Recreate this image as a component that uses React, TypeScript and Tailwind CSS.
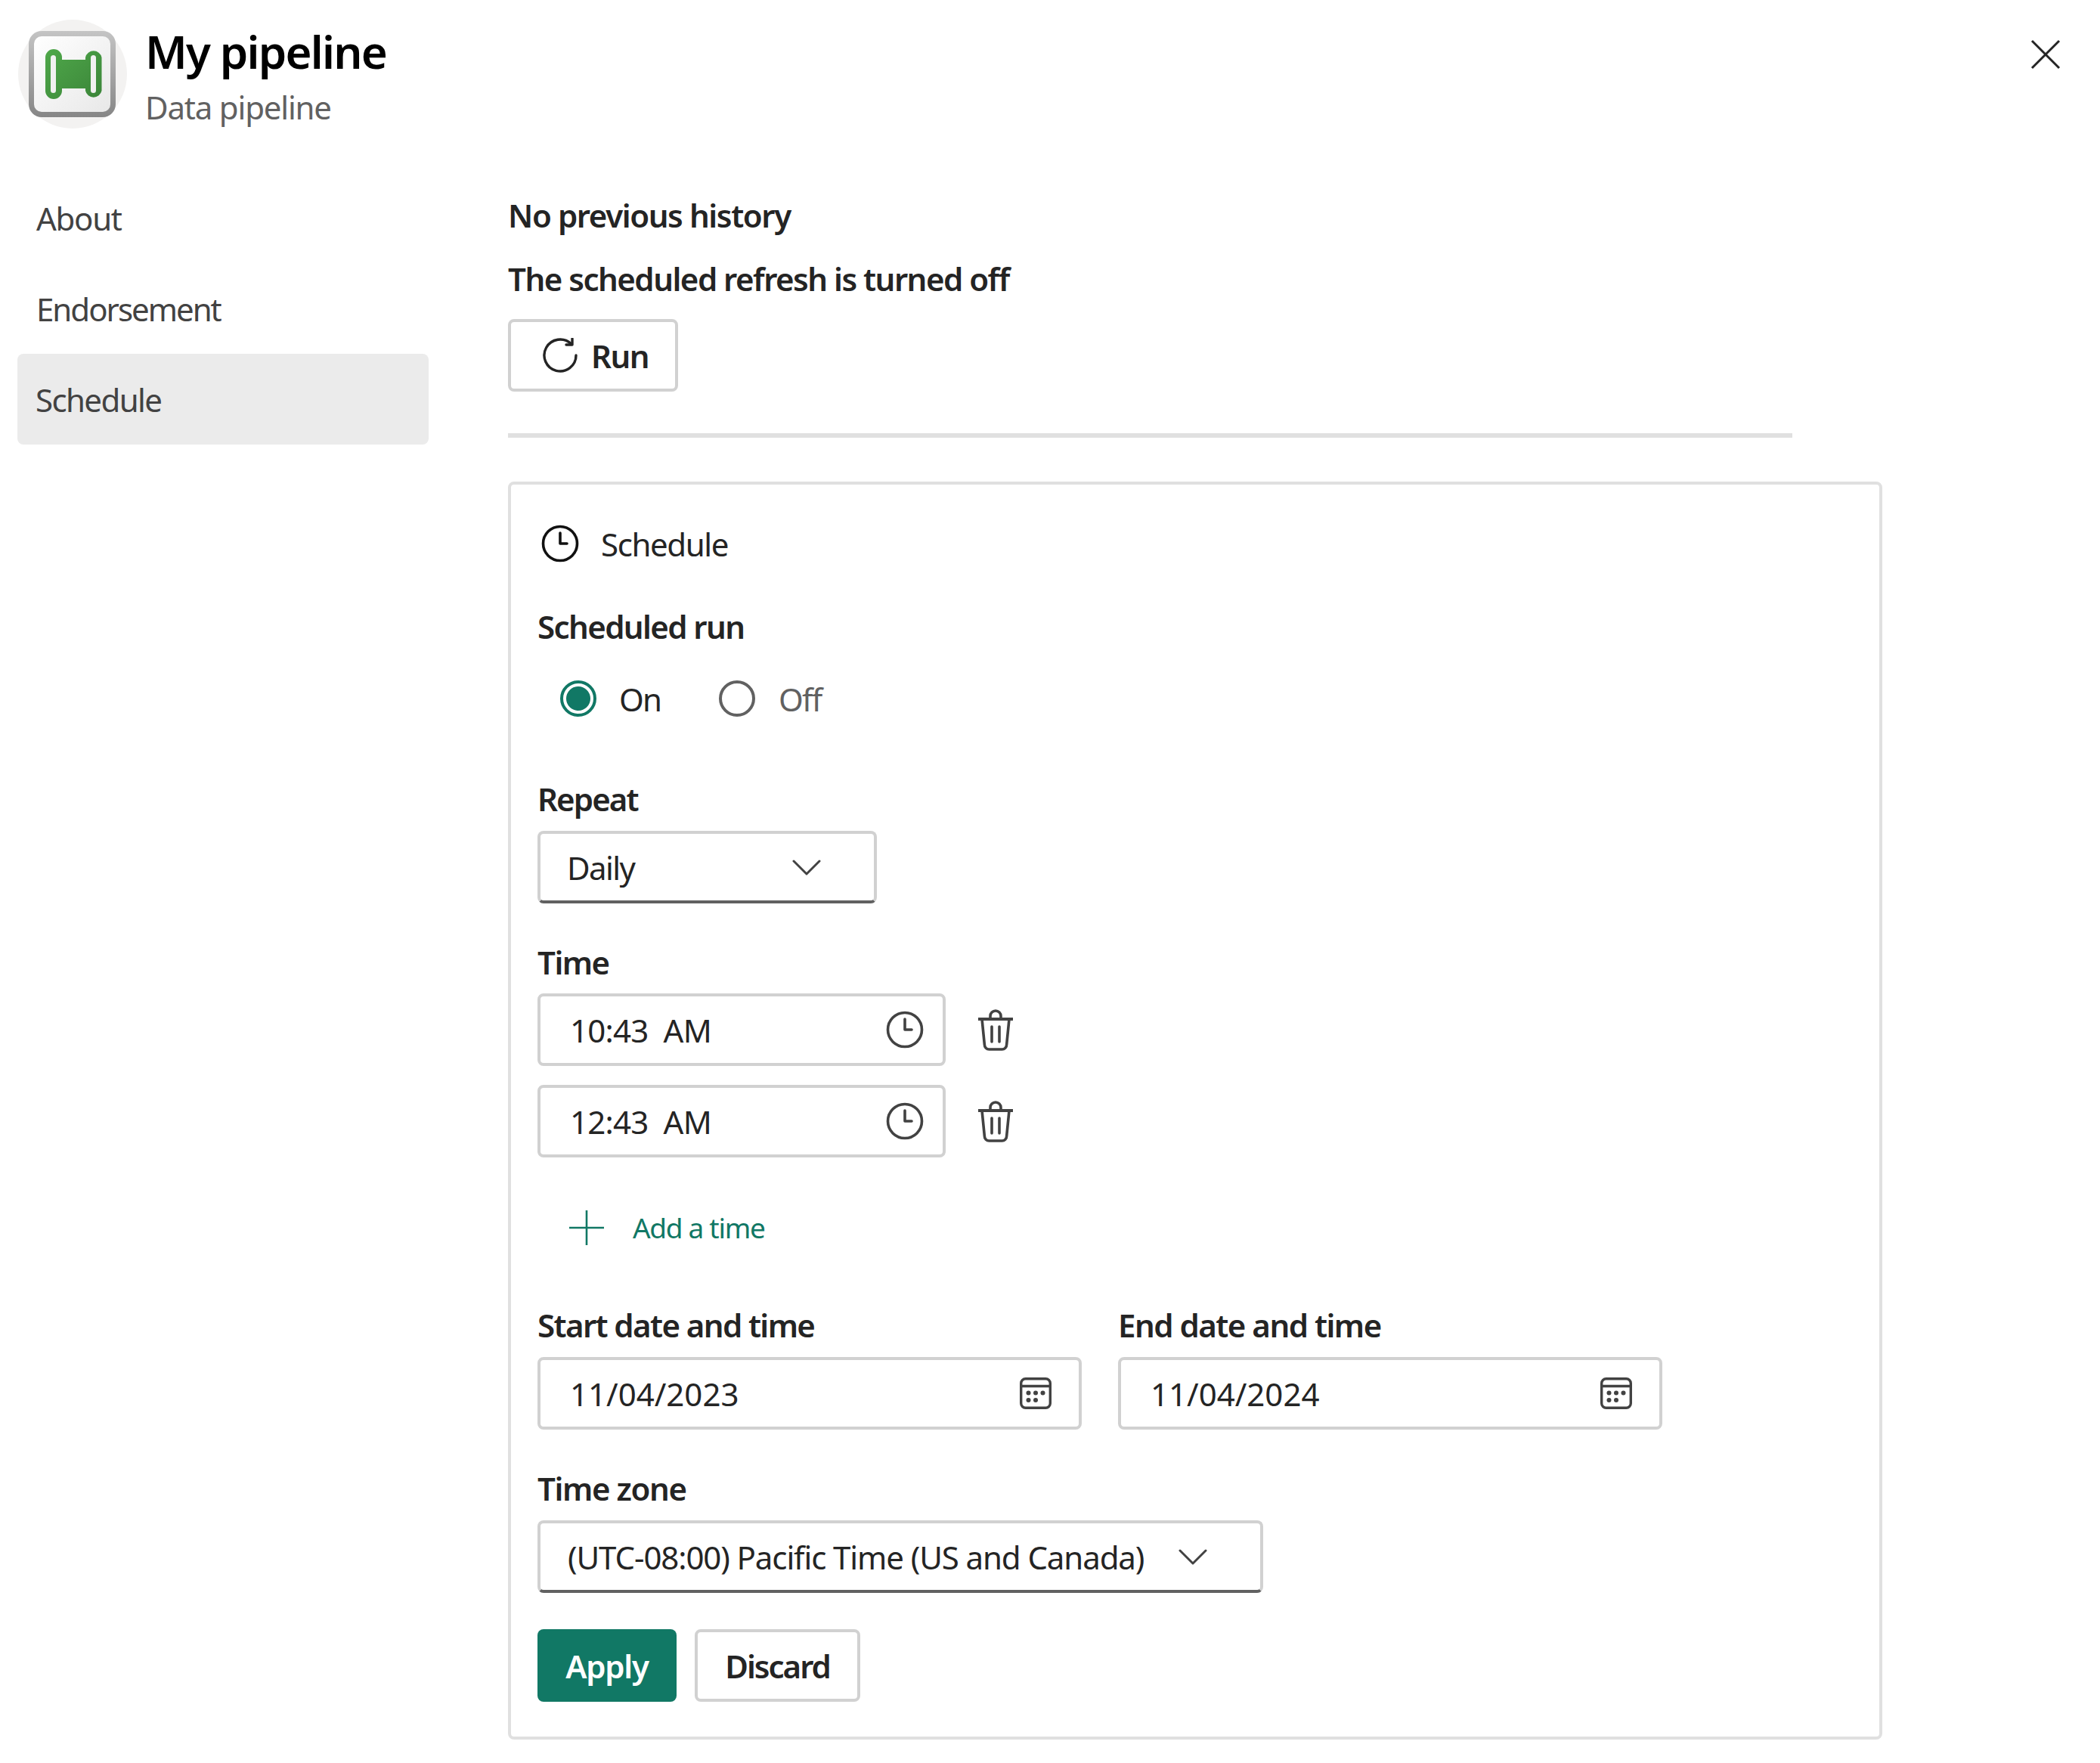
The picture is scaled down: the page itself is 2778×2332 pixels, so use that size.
import React from "react";

const Clock = ({ className = "" }: { className?: string }) => (
  <svg viewBox="0 0 50 50" className={className} fill="none" stroke="currentColor" strokeWidth="3.6">
    <circle cx="25" cy="25" r="22.5" />
    <path d="M25 11v14h9" strokeLinecap="round" strokeLinejoin="round" />
  </svg>
);

const Trash = () => (
  <svg viewBox="0 0 48 56" className="w-[48px] h-[56px] text-[#424242] ml-[42px]" fill="none" stroke="currentColor" strokeWidth="3.6">
    <path d="M1 14h46" strokeWidth="4.2" />
    <path d="M17 13V10a7 7 0 0 1 14 0v3" />
    <path d="M6 14l3.4 34a6 6 0 0 0 6 6h17.2a6 6 0 0 0 6-6L42 14" strokeLinejoin="round" />
    <path d="M19 24v20M29 24v20" strokeLinecap="round" />
  </svg>
);

const Calendar = () => (
  <svg viewBox="0 0 42 42" className="w-[42px] h-[42px] text-[#424242]" fill="none" stroke="currentColor" strokeWidth="3.4">
    <rect x="1.7" y="1.7" width="38.600" height="38.600" rx="6" />
    <path d="M1.7 11.500h38.600" />
    <g fill="currentColor" stroke="none">
      <circle cx="11.500" cy="20.500" r="3" />
      <circle cx="21" cy="20.500" r="3" />
      <circle cx="30.500" cy="20.500" r="3" />
      <circle cx="11.500" cy="30" r="3" />
      <circle cx="21" cy="30" r="3" />
    </g>
  </svg>
);

const Chevron = () => (
  <svg viewBox="0 0 38 22" className="w-[38px] h-[22px] text-[#424242]" fill="none" stroke="currentColor" strokeWidth="3" strokeLinecap="round" strokeLinejoin="round">
    <path d="M2 3l17 17L36 3" />
  </svg>
);

const Label = ({ children, className = "" }: { children: React.ReactNode; className?: string }) => (
  <div className={`h-[60px] leading-[60px] text-[42px] font-[570] text-[#242424] ${className}`}>{children}</div>
);

const Field = ({ text, icon, className = "", textClass = "tracking-[-0.6px]" }: { text: string; icon: React.ReactNode; className?: string; textClass?: string }) => (
  <div className={`h-[96px] border-[4px] border-[#d1d1d1] rounded-[8px] flex items-center justify-between bg-white ${className}`}>
    <span className={`text-[42px] text-[#242424] ${textClass}`}>{text}</span>
    {icon}
  </div>
);

const Logo = () => (
  <div className="w-[144px] h-[144px] rounded-full bg-[#f3f2f1] shrink-0">
    <svg viewBox="0 0 144 144" className="w-[144px] h-[144px]">
      <defs>
        <linearGradient id="frame" x1="0" y1="0" x2="0" y2="1">
          <stop offset="0" stopColor="#c4c4c4" />
          <stop offset="1" stopColor="#868686" />
        </linearGradient>
        <linearGradient id="inner" x1="0" y1="0" x2="1" y2="1">
          <stop offset="0" stopColor="#ffffff" />
          <stop offset="1" stopColor="#e8e8e8" />
        </linearGradient>
        <linearGradient id="green" x1="0" y1="0" x2="1" y2="1">
          <stop offset="0" stopColor="#4fa84a" />
          <stop offset="1" stopColor="#3b8539" />
        </linearGradient>
      </defs>
      <rect x="14" y="15" width="115" height="114" rx="17" fill="url(#frame)" />
      <rect x="21" y="22" width="101" height="100" rx="10" fill="url(#inner)" />
      <path
        fill="url(#green)"
        d="M36 50a11 11 0 0 1 22 0v3h31v-3a11 11 0 0 1 21.500 0v44a11 11 0 0 1-21.500 0v-3H58v3a11 11 0 0 1-22 0z"
      />
      <rect x="43" y="47" width="7" height="50" rx="3.500" fill="#f1f1f1" />
      <rect x="96" y="47" width="7" height="50" rx="3.500" fill="#f1f1f1" />
    </svg>
  </div>
);

export default function App() {
  return (
    <div className="w-[2778px] h-[2332px] bg-white overflow-hidden font-['Noto_Sans','Open_Sans',sans-serif]">
      <header className="flex pl-[24px] pt-[26px] h-[170px]">
        <Logo />
        <div className="ml-[24px] pt-[8px]">
          <div className="text-[60px] leading-[68px] font-[570] text-black tracking-[-1.800px]">My pipeline</div>
          <div className="mt-[18px] text-[42px] leading-[44px] text-[#616161] tracking-[-1.2px]">Data pipeline</div>
        </div>
        <svg viewBox="0 0 40 40" className="w-[40px] h-[40px] ml-auto mr-[52px] mt-[26px] text-[#242424]" fill="none" stroke="currentColor" strokeWidth="3">
          <path d="M2 2l36 36M38 2L2 38" />
        </svg>
      </header>

      <main className="flex">
        <nav className="mt-[58px] ml-[23px] w-[544px] shrink-0 text-[42px] text-[#424242]">
          <div className="h-[120px] flex items-center pl-[25px] tracking-[-1.3px]">About</div>
          <div className="h-[120px] flex items-center pl-[25px] tracking-[-2px]">Endorsement</div>
          <div className="h-[120px] flex items-center pl-[24px] bg-[#ebebeb] rounded-[8px] tracking-[-1.600px]">Schedule</div>
        </nav>

        <section className="ml-[105px] pt-[85px]">
          <Label className="tracking-[-1.400px]">No previous history</Label>
          <Label className="mt-[24px] tracking-[-1.500px]">The scheduled refresh is turned off</Label>
          <button className="mt-[23px] w-[225px] h-[96px] border-[4px] border-[#d1d1d1] rounded-[8px] flex items-center pl-[42px] text-[#242424]">
            <svg viewBox="0 0 46 46" className="w-[46px] h-[46px]" fill="none" stroke="currentColor" strokeWidth="3.4" strokeLinecap="round" strokeLinejoin="round">
              <path d="M44 23a21 21 0 1 1-6.500-15.200" />
              <path d="M39 1v8h-8" />
            </svg>
            <span className="ml-[18px] text-[42px] font-[570] tracking-[-1.500px]">Run</span>
          </button>
          <div className="mt-[55px] w-[1699px] h-[6px] bg-[#e0e0e0]" />

          <div className="mt-[58px] w-[1818px] h-[1664px] border-[4px] border-[#e0e0e0] rounded-[8px] pl-[35px] pt-[48px]">
            <div className="h-[60px] flex items-center">
              <Clock className="w-[50px] h-[50px] ml-[5px] text-[#111]" />
              <span className="ml-[29px] text-[42px] text-[#242424] tracking-[-1.400px]">Schedule</span>
            </div>

            <Label className="mt-[50px] tracking-[-1.600px]">Scheduled run</Label>

            <div className="mt-[35px] h-[60px] flex items-center text-[42px] pl-[30px] tracking-[-1.700px]">
              <span className="w-[48px] h-[48px] rounded-full border-[4px] border-[#117865] flex items-center justify-center">
                <span className="w-[32px] h-[32px] rounded-full bg-[#117865]" />
              </span>
              <span className="ml-[30px] w-[132px] text-[#242424]">On</span>
              <span className="w-[48px] h-[48px] rounded-full border-[4px] border-[#616161]" />
              <span className="ml-[31px] text-[#616161]">Off</span>
            </div>

            <Label className="mt-[73px] tracking-[-1.900px]">Repeat</Label>
            <div className="mt-[12px] w-[449px] h-[96px] border-[4px] border-[#d1d1d1] border-b-[#616161] rounded-[8px] flex items-center pl-[35px] pr-[70px] justify-between">
              <span className="text-[42px] text-[#242424] tracking-[-1.600px]">Daily</span>
              <Chevron />
            </div>

            <Label className="mt-[48px] tracking-[-1.500px]">Time</Label>
            <div className="mt-[11px] flex items-center">
              <Field text="10:43  AM" textClass="tracking-[-0.8px]" className="w-[540px] pl-[39px] pr-[25px] whitespace-pre" icon={<Clock className="w-[50px] h-[50px] text-[#424242]" />} />
              <Trash />
            </div>
            <div className="mt-[25px] flex items-center">
              <Field text="12:43  AM" textClass="tracking-[-0.8px]" className="w-[540px] pl-[39px] pr-[25px] whitespace-pre" icon={<Clock className="w-[50px] h-[50px] text-[#424242]" />} />
              <Trash />
            </div>

            <div className="mt-[63px] h-[60px] flex items-center pl-[42px] text-[#117865]">
              <svg viewBox="0 0 46 46" className="w-[46px] h-[46px]" fill="none" stroke="currentColor" strokeWidth="2.600">
                <path d="M23 0v46M0 23h46" />
              </svg>
              <span className="ml-[38px] text-[37px] tracking-[-1.300px]">Add a time</span>
            </div>

            <div className="mt-[69px] flex gap-[48px]">
              <div className="w-[720px]">
                <Label className="tracking-[-1.600px]">Start date and time</Label>
                <Field text="11/04/2023" textClass="tracking-[0px]" className="mt-[12px] pl-[39px] pr-[36px]" icon={<Calendar />} />
              </div>
              <div className="w-[720px]">
                <Label className="tracking-[-1.500px]">End date and time</Label>
                <Field text="11/04/2024" textClass="tracking-[0px]" className="mt-[12px] pl-[39px] pr-[36px]" icon={<Calendar />} />
              </div>
            </div>

            <Label className="mt-[48px] tracking-[-1.400px]">Time zone</Label>
            <div className="mt-[12px] w-[960px] h-[96px] border-[4px] border-[#d1d1d1] border-b-[#616161] rounded-[8px] flex items-center pl-[36px]">
              <span className="text-[42px] text-[#242424] tracking-[-1.100px] w-[808px] whitespace-nowrap">(UTC-08:00) Pacific Time (US and Canada)</span>
              <Chevron />
            </div>

            <div className="mt-[48px] flex gap-[24px]">
              <button className="w-[184px] h-[96px] bg-[#117865] rounded-[8px] text-white text-[42px] font-[570] tracking-[-1.200px]">Apply</button>
              <button className="w-[219px] h-[96px] border-[4px] border-[#d1d1d1] rounded-[8px] text-[#242424] text-[42px] font-[570] tracking-[-2px]">Discard</button>
            </div>
          </div>
        </section>
      </main>
    </div>
  );
}
